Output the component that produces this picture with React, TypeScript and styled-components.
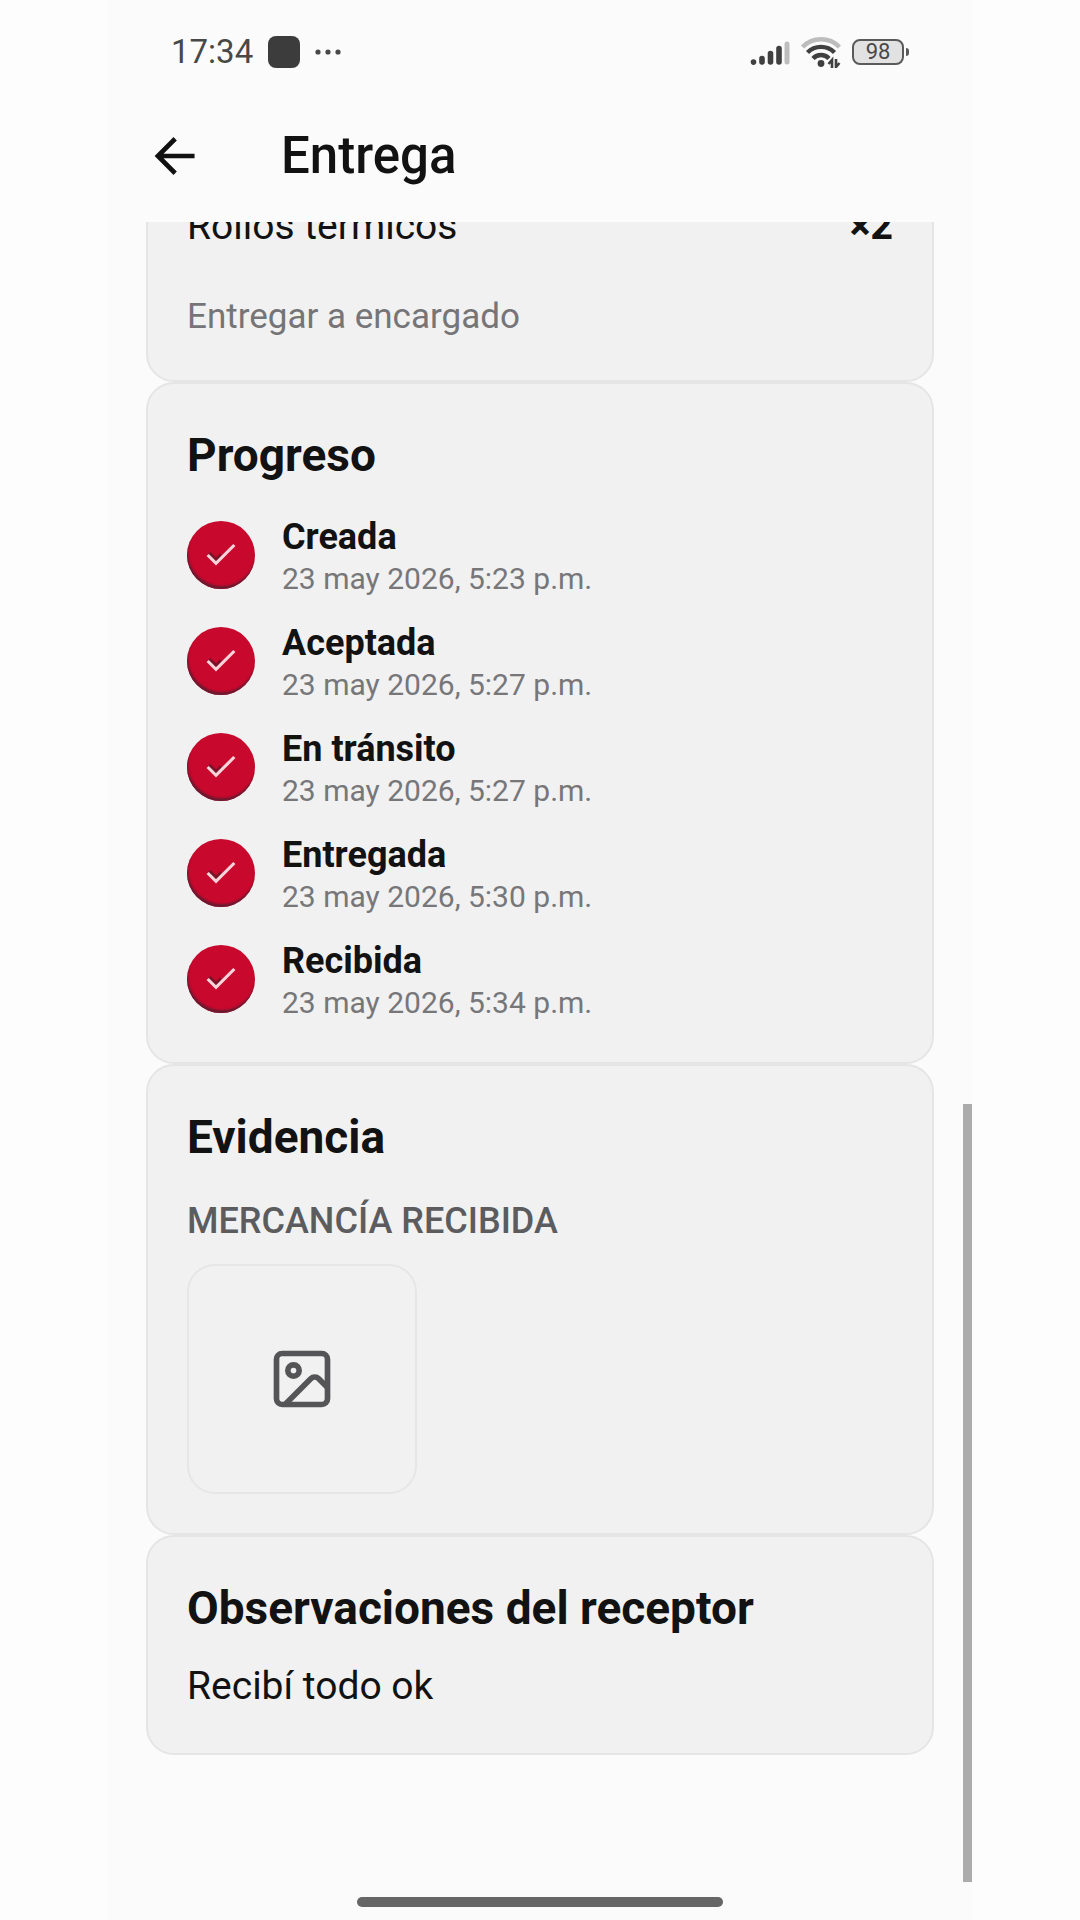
import React, { useLayoutEffect, useRef } from "react";
import styled, { createGlobalStyle } from "styled-components";

const GlobalStyle = createGlobalStyle`
  *, *::before, *::after { box-sizing: border-box; }
  body {
    margin: 0;
    background: #fdfdfd;
    color: #121212;
    font-family: Roboto, "Liberation Sans", sans-serif;
  }
  h1, h2, h3, p, ol, ul { margin: 0; padding: 0; }
  ol { list-style: none; }
`;

const Screen = styled.main`
  position: relative;
  display: flex;
  flex-direction: column;
  width: 80%;
  height: 100vh;
  margin: 0 auto;
  background: #fbfbfb;
`;

const StatusBar = styled.div`
  display: flex;
  align-items: center;
  justify-content: space-between;
  height: 104px;
  padding: 0 68px 0 63px;
  color: #484848;
`;

const StatusGroup = styled.div<{ $gap: number }>`
  display: flex;
  align-items: center;
  gap: ${(p) => p.$gap}px;
`;

const Clock = styled.span`
  font-size: 33px;
  line-height: 40px;
`;

const AppBadge = styled.span`
  width: 32px;
  height: 32px;
  border-radius: 8px;
  background: #3c3c3c;
`;

const Battery = styled.span`
  position: relative;
  display: flex;
  align-items: center;
  justify-content: center;
  width: 52px;
  height: 26px;
  border: 2px solid #5a5a5a;
  border-radius: 8px;
  background: #e2e2e2;
  font-size: 22px;
  line-height: 22px;

  &::after {
    content: "";
    position: absolute;
    left: 52px;
    width: 3px;
    height: 8px;
    border-radius: 0 3px 3px 0;
    background: #5a5a5a;
  }
`;

const Header = styled.header`
  display: flex;
  align-items: center;
  gap: 79px;
  height: 104px;
  margin-bottom: 14px;
  padding: 0 38px;
`;

const BackButton = styled.button`
  display: flex;
  width: 56px;
  height: 56px;
  padding: 0;
  border: 0;
  background: none;
  color: #111;
`;

const Title = styled.h1`
  font-size: 51px;
  font-weight: 500;
  line-height: 60px;
`;

const ScrollArea = styled.div`
  flex: 1;
  min-height: 0;
  padding: 0 38px 129px;
  overflow-y: auto;
  scrollbar-width: none;
`;

const ScrollThumb = styled.div`
  position: absolute;
  right: 0;
  bottom: 38px;
  width: 9px;
  height: 778px;
  background: #ababab;
`;

const Card = styled.section`
  padding: 39px;
  border: 2px solid #e5e5e6;
  border-radius: 28px;
  background: #f1f1f1;
`;

const Heading = styled.h2<{ $space: number }>`
  margin-bottom: ${(p) => p.$space}px;
  font-size: 46px;
  font-weight: 700;
  line-height: 64px;
`;

const ItemRow = styled.div`
  display: flex;
  justify-content: space-between;
  margin-bottom: 41px;
  font-size: 39px;
  line-height: 52px;
`;

const Quantity = styled.strong`
  font-weight: 800;
`;

const Note = styled.p`
  color: #757577;
  font-size: 35px;
  line-height: 48px;
`;

const Body = styled.p`
  font-size: 39px;
  line-height: 56px;
`;

const Steps = styled.ol`
  display: flex;
  flex-direction: column;
  gap: 22px;
`;

const Step = styled.li`
  display: flex;
  align-items: flex-start;
  gap: 27px;
`;

const StepMark = styled.span`
  display: flex;
  align-items: center;
  justify-content: center;
  width: 68px;
  height: 68px;
  margin-top: 6px;
  border-radius: 50%;
  background: #c8082c;
  box-shadow: inset 1px -3px 2px #6b1a30;
`;

const StepName = styled.h3`
  font-size: 36px;
  font-weight: 700;
  line-height: 44px;
`;

const StepTime = styled.time`
  display: block;
  color: #77777a;
  font-size: 30px;
  line-height: 40px;
`;

const Label = styled.h3`
  margin-bottom: 21px;
  color: #5c5c5f;
  font-size: 36px;
  font-weight: 500;
  line-height: 44px;
  text-transform: uppercase;
`;

const Photo = styled.button`
  display: flex;
  align-items: center;
  justify-content: center;
  width: 230px;
  height: 230px;
  padding: 0;
  border: 2px solid #e6e6e8;
  border-radius: 28px;
  background: #f1f1f2;
  color: #555557;
`;

const HomeBar = styled.footer`
  display: flex;
  align-items: center;
  justify-content: center;
  height: 36px;

  &::before {
    content: "";
    width: 366px;
    height: 10px;
    border-radius: 5px;
    background: #666;
  }
`;

const steps = [
  { name: "Creada", time: "23 may 2026, 5:23 p.m." },
  { name: "Aceptada", time: "23 may 2026, 5:27 p.m." },
  { name: "En tránsito", time: "23 may 2026, 5:27 p.m." },
  { name: "Entregada", time: "23 may 2026, 5:30 p.m." },
  { name: "Recibida", time: "23 may 2026, 5:34 p.m." },
];

const DotsIcon = () => (
  <svg width="28" height="8" viewBox="0 0 28 8" fill="currentColor">
    <circle cx="3" cy="4" r="2.6" />
    <circle cx="13" cy="4" r="2.6" />
    <circle cx="23" cy="4" r="2.6" />
  </svg>
);

const SignalIcon = () => (
  <svg width="40" height="28" viewBox="0 0 40 28" stroke="#404040" strokeWidth="5.6" strokeLinecap="round">
    <path d="M3.500 24v.1M12 20.500v3.500M20.500 15.500v8.500M29 10.500v13.500" />
    <path d="M37 6v18" stroke="#bdbdbd" strokeWidth="5" />
  </svg>
);

const WifiIcon = () => (
  <svg width="40" height="32" viewBox="0 0 40 32" fill="none" stroke="#404040" strokeWidth="4.4">
    <path d="M1.500 11a26 26 0 0 1 37 0" stroke="#bdbdbd" />
    <path d="M6.500 16.500a19 19 0 0 1 27 0" />
    <path d="M12 22.500a11 11 0 0 1 16 0" />
    <circle cx="20" cy="27.500" r="3.400" fill="#404040" stroke="none" />
    <path d="M31 32v-8l-3.500 4M35 23v8l3.500-4" strokeWidth="2.600" />
  </svg>
);

const ArrowIcon = () => (
  <svg width="56" height="56" viewBox="0 0 24 24" fill="none" stroke="currentColor" strokeWidth="2">
    <path d="m12.500 19.400-7.400-7.400 7.400-7.400M20.800 12H5.100" />
  </svg>
);

const CheckIcon = () => (
  <svg width="40" height="40" viewBox="0 0 24 24" fill="none" strokeWidth="1.900">
    <path d="m5 10.800 4 4 3-3" stroke="#7a1228" />
    <path d="M20 6 9 17l-5-5" stroke="#f8d3da" />
  </svg>
);

const ImageIcon = () => (
  <svg width="68" height="68" viewBox="0 0 24 24" fill="none" stroke="currentColor" strokeWidth="2" strokeLinejoin="round">
    <rect x="3" y="3" width="18" height="18" rx="2" />
    <circle cx="9" cy="9" r="2" />
    <path d="m21 15-3.086-3.086a2 2 0 0 0-2.828 0L6 21" />
  </svg>
);

export default function App() {
  const scroller = useRef<HTMLDivElement>(null);

  useLayoutEffect(() => {
    const node = scroller.current;
    if (node) node.scrollTop = node.scrollHeight;
  }, []);

  return (
    <>
      <GlobalStyle />
      <Screen>
        <StatusBar>
          <StatusGroup $gap={15}>
            <Clock>17:34</Clock>
            <AppBadge />
            <DotsIcon />
          </StatusGroup>
          <StatusGroup $gap={11}>
            <SignalIcon />
            <WifiIcon />
            <Battery>98</Battery>
          </StatusGroup>
        </StatusBar>
        <Header>
          <BackButton type="button" aria-label="Volver">
            <ArrowIcon />
          </BackButton>
          <Title>Entrega</Title>
        </Header>
        <ScrollArea ref={scroller}>
          <Card>
            <ItemRow>
              <span>Rollos térmicos</span>
              <Quantity>×2</Quantity>
            </ItemRow>
            <Note>Entregar a encargado</Note>
          </Card>
          <Card>
            <Heading $space={28}>Progreso</Heading>
            <Steps>
              {steps.map((step) => (
                <Step key={step.name}>
                  <StepMark>
                    <CheckIcon />
                  </StepMark>
                  <div>
                    <StepName>{step.name}</StepName>
                    <StepTime>{step.time}</StepTime>
                  </div>
                </Step>
              ))}
            </Steps>
          </Card>
          <Card>
            <Heading $space={30}>Evidencia</Heading>
            <Label>Mercancía recibida</Label>
            <Photo type="button" aria-label="Ver foto">
              <ImageIcon />
            </Photo>
          </Card>
          <Card>
            <Heading $space={18}>Observaciones del receptor</Heading>
            <Body>Recibí todo ok</Body>
          </Card>
        </ScrollArea>
        <ScrollThumb />
        <HomeBar />
      </Screen>
    </>
  );
}
